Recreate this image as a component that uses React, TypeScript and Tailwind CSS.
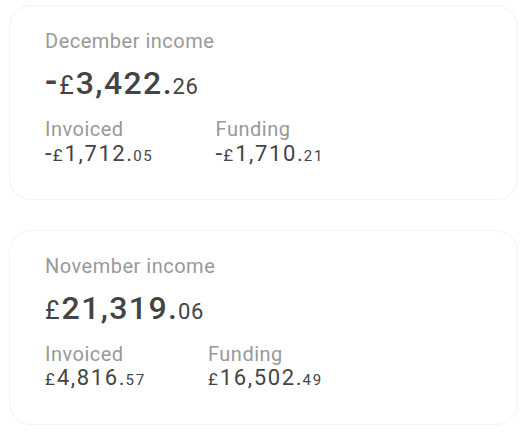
import React from "react";

type Amt = { sign?: string; whole: string; dec: string };

function Big({ a }: { a: Amt }) {
  return (
    <div className="flex items-baseline text-[#444] leading-[40px] mt-[10px]">
      {a.sign && <span className="text-[36px] leading-none font-medium mr-[2px]">{a.sign}</span>}
      <span className="text-[25px] leading-none mr-[2px]">£</span>
      <span className="text-[32px] font-medium tracking-[1.4px]">{a.whole}</span>
      <span className="text-[32px] font-medium">.</span>
      <span className="text-[22px] leading-none tracking-[0.6px] ml-[1px]">{a.dec}</span>
    </div>
  );
}

function Small({ a }: { a: Amt }) {
  return (
    <div className="flex items-baseline text-[#444] leading-[24px]">
      {a.sign && <span className="text-[24px] leading-none mr-[1px]">{a.sign}</span>}
      <span className="text-[17px] leading-none mr-[2px]">£</span>
      <span className="text-[22px] tracking-[1.6px]">{a.whole}</span>
      <span className="text-[22px]">.</span>
      <span className="text-[15px] leading-none tracking-[1.8px] ml-[1px]">{a.dec}</span>
    </div>
  );
}

function Card({
  title,
  total,
  inv,
  fund,
}: {
  title: string;
  total: Amt;
  inv: Amt;
  fund: Amt;
}) {
  return (
    <div className="rounded-[22px] border border-[#f3f3f3] bg-white pl-[35px] pt-[23px] h-[195px]">
      <div className="text-[20px] leading-[24px] tracking-[0.5px] text-[#999]">{title}</div>
      <Big a={total} />
      <div className="flex gap-[62px] mt-[14px]">
        <div>
          <div className="text-[20px] leading-[24px] tracking-[0.5px] text-[#999]">Invoiced</div>
          <Small a={inv} />
        </div>
        <div>
          <div className="text-[20px] leading-[24px] tracking-[0.5px] text-[#999]">Funding</div>
          <Small a={fund} />
        </div>
      </div>
    </div>
  );
}

export default function App() {
  return (
    <div
      className="w-[527px] h-[433px] bg-white px-[9px] pt-[5px] flex flex-col gap-[30px]"
      style={{ fontFamily: "Roboto, 'Open Sans', sans-serif" }}
    >
      <Card
        title="December income"
        total={{ sign: "-", whole: "3,422", dec: "26" }}
        inv={{ sign: "-", whole: "1,712", dec: "05" }}
        fund={{ sign: "-", whole: "1,710", dec: "21" }}
      />
      <Card
        title="November income"
        total={{ whole: "21,319", dec: "06" }}
        inv={{ whole: "4,816", dec: "57" }}
        fund={{ whole: "16,502", dec: "49" }}
      />
    </div>
  );
}
